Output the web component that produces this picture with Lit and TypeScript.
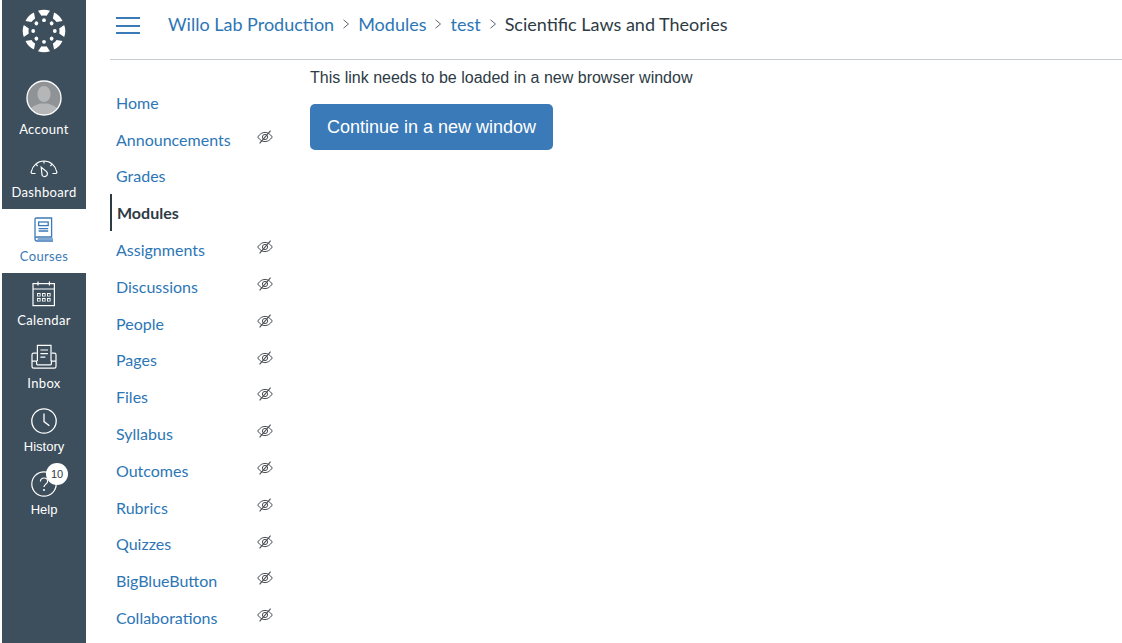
import { LitElement, html, css, svg } from "lit";
import { customElement } from "lit/decorators.js";

const eye = html`<svg class="eye" viewBox="0 0 16 14" width="16" height="14" fill="none" stroke="#4a4f55" stroke-width="1">
  <path d="M.7 7C3 3.8 5.4 2.4 8 2.4S13 3.8 15.3 7C13 10.2 10.6 11.6 8 11.6S3 10.2.7 7Z"/>
  <circle cx="8" cy="7" r="2.6"/>
  <path d="M2.6 13.4 13.6.6" stroke-width="1.1"/>
</svg>`;

const logo = html`<svg viewBox="-22 -22 44 44" width="44" height="44" fill="#fff">
  ${[0, 45, 90, 135, 180, 225, 270, 315].map(
    (a) => svg`<g transform="rotate(${a})">
      <path d="M-6 -20.2Q0 -22.4 6 -20.2L2.6 -15.2Q0 -15.8 -2.6 -15.2Z"/>
      <circle cx="0" cy="-10.8" r="1.9"/>
    </g>`
  )}
</svg>`;

const account = html`<svg viewBox="0 0 36 36" width="36" height="36">
  <defs><clipPath id="c"><circle cx="18" cy="18" r="16.4"/></clipPath></defs>
  <circle cx="18" cy="18" r="16.4" fill="#8f9396"/>
  <g clip-path="url(#c)" fill="#b4b6b8">
    <circle cx="18" cy="18" r="16.4" fill="#3d4f5c" opacity="0"/>
    <ellipse cx="18" cy="14" rx="6.6" ry="8"/>
    <path d="M2 36C2 27 9 25.5 14 23.5H22C27 25.5 34 27 34 36Z"/>
  </g>
  <circle cx="18" cy="18" r="17" fill="none" stroke="#fff" stroke-width="1.4"/>
</svg>`;

const dash = html`<svg viewBox="0 0 28 26" width="28" height="26" fill="none" stroke="#fff" stroke-width="1.2">
  <path d="M5.5 20.5H2.2C1.3 20.5 1 19.8 1.2 19C2.4 12.6 7.6 8 14 8S25.6 12.6 26.8 19C27 19.8 26.7 20.5 25.8 20.5H22.5"/>
  <path d="M14 8V10.4M6 11.4 7.6 13M22 11.4 20.4 13" />
  <path d="M11.2 14.2 16.6 18.6C17.8 20 17.6 22 16.2 23C14.8 24 12.9 23.6 12.1 22.2Z"/>
</svg>`;

const book = html`<svg viewBox="0 0 20 26" width="20" height="26" fill="none" stroke="#3b7ab8" stroke-width="1.3">
  <path d="M1 21.5V2.2C1 1.5 1.5 1 2.2 1H17.6V20H3C1.8 20 1 20.7 1 21.8S1.8 24 3 24H19"/>
  <path d="M3.6 22H19"/>
  <rect x="4.6" y="5" width="9.6" height="3.6"/>
  <path d="M4.6 11.6H14.2M4.6 14H14.2"/>
</svg>`;

const calendar = html`<svg viewBox="0 0 24 26" width="24" height="26" fill="none" stroke="#fff" stroke-width="1.2">
  <rect x="1" y="2.6" width="21.4" height="22"/>
  <path d="M1 8H22.4M6 .6V4.4M17.4 .6V4.4"/>
  <g fill="#fff" stroke="none">
    ${[5, 10, 15].flatMap((x) =>
      [12, 17].map((y) => svg`<path fill-rule="evenodd" d="M${x} ${y}h3.6v3.6h-3.6zM${x + 0.9} ${y + 0.9}v1.8h1.8v-1.8z"/>`)
    )}
  </g>
</svg>`;

const inbox = html`<svg viewBox="0 0 26 26" width="26" height="26" fill="none" stroke="#fff" stroke-width="1.2">
  <path d="M6.4 17V1.4H20V17"/>
  <path d="M9.4 6H17M9.4 9.6H17M9.4 13.2H14.4"/>
  <path d="M5.8 9.2H2.6C1.6 9.2 1 9.9 1 10.8V22.6C1 23.6 1.6 24.2 2.6 24.2H23.4C24.4 24.2 25 23.6 25 22.6V10.8C25 9.9 24.4 9.2 23.4 9.2H20.6"/>
  <path d="M1 17.2H5.6V19.8C5.6 20.4 6 20.8 6.6 20.8H19.4C20 20.8 20.4 20.4 20.4 19.8V17.2H25"/>
</svg>`;

const clock = html`<svg viewBox="0 0 26 26" width="26" height="26" fill="none" stroke="#fff" stroke-width="1.3">
  <circle cx="13" cy="13" r="12.2"/>
  <path d="M13 5.4V13.6L18.4 17.8"/>
</svg>`;

const help = html`<svg viewBox="0 0 26 26" width="26" height="26" fill="none" stroke="#fff" stroke-width="1.2">
  <circle cx="13" cy="13" r="12.2"/>
  <path d="M9.4 10.4C9.4 8.2 11 7 13 7S16.6 8.2 16.6 10.2C16.6 13 13 13.2 13 16"/>
  <circle cx="13" cy="19" r="1" fill="#fff" stroke="none"/>
</svg>`;

const globalItems = [
  { label: "Account", icon: account, cls: "acct" },
  { label: "Dashboard", icon: dash, cls: "" },
  { label: "Courses", icon: book, cls: "active" },
  { label: "Calendar", icon: calendar, cls: "" },
  { label: "Inbox", icon: inbox, cls: "" },
  { label: "History", icon: clock, cls: "helv" },
  { label: "Help", icon: help, cls: "helv help" },
];

const courseItems: [string, boolean][] = [
  ["Home", false],
  ["Announcements", true],
  ["Grades", false],
  ["Modules", false],
  ["Assignments", true],
  ["Discussions", true],
  ["People", true],
  ["Pages", true],
  ["Files", true],
  ["Syllabus", true],
  ["Outcomes", true],
  ["Rubrics", true],
  ["Quizzes", true],
  ["BigBlueButton", true],
  ["Collaborations", true],
];

@customElement("app-root")
export class AppRoot extends LitElement {
  static styles = css`
    :host {
      display: block;
      height: 643px;
      overflow: hidden;
      background: #fff;
      font-family: "Lato", "Liberation Sans", sans-serif;
    }
    .page {
      display: flex;
      height: 643px;
      padding-left: 2px;
      box-sizing: border-box;
    }
    .global {
      width: 84px;
      flex: none;
      background: #3d4f5c;
      display: flex;
      flex-direction: column;
    }
    .logo {
      height: 81.8px;
      flex: none;
      display: flex;
      justify-content: center;
      padding-top: 9px;
      box-sizing: border-box;
    }
    .gitem {
      height: 63.6px;
      flex: none;
      display: flex;
      flex-direction: column;
      align-items: center;
      color: #fff;
      font-size: 13px;
      letter-spacing: 0.35px;
      box-sizing: border-box;
      padding-top: 8px;
      position: relative;
    }
    .gicon {
      height: 26px;
      display: flex;
      align-items: flex-end;
      justify-content: center;
      position: relative;
    }
    .glabel {
      margin-top: 5px;
      line-height: 16px;
    }
    .gitem.active {
      background: #fff;
      color: #3b7ab8;
    }
    .gitem.helv {
      font-family: "Liberation Sans", sans-serif;
      letter-spacing: 0;
    }
    .badge {
      position: absolute;
      left: 15px;
      top: -8px;
      width: 22px;
      height: 22px;
      border-radius: 50%;
      background: #fff;
      color: #2d3b45;
      font-family: "Liberation Sans", sans-serif;
      font-size: 11px;
      line-height: 22px;
      text-align: center;
    }
    .main {
      flex: 1;
      min-width: 0;
      padding-left: 24px;
    }
    .header {
      height: 60px;
      box-sizing: border-box;
      border-bottom: 1px solid #c7cdd1;
      display: flex;
      align-items: flex-start;
      padding: 0 0 0 6px;
    }
    .burger {
      width: 24px;
      margin-top: 17px;
      display: flex;
      flex-direction: column;
      gap: 5.5px;
    }
    .burger span {
      display: block;
      height: 2px;
      background: #3b7ab8;
    }
    .crumbs {
      margin: 13px 0 0 28px;
      display: flex;
      align-items: center;
      font-size: 18px;
      line-height: 22px;
    }
    .crumbs a {
      color: #2d76b5;
    }
    .crumbs .cur {
      color: #2d3b45;
    }
    .sep {
      width: 24px;
      display: flex;
      justify-content: center;
    }
    .below {
      display: flex;
    }
    .cnav {
      width: 200px;
      flex: none;
      padding-top: 24px;
      box-sizing: content-box;
    }
    .citem {
      height: 36.8px;
      display: flex;
      align-items: center;
      padding-left: 6px;
      color: #2d76b5;
      font-size: 16px;
      position: relative;
      box-sizing: border-box;
      width: 164px;
    }
    .citem.cur {
      color: #2d3b45;
      font-weight: 700;
      border-left: 2px solid #2d3b45;
      padding-left: 5px;
    }
    .eye {
      position: absolute;
      left: 147px;
      top: 9px;
    }
    .content {
      padding-left: 0;
      color: #2d3b45;
      font-family: "Liberation Sans", sans-serif;
    }
    .msg {
      font-size: 16px;
      line-height: 20px;
      margin-top: 8px;
    }
    .btn {
      display: inline-block;
      margin-top: 16px;
      width: 243px;
      height: 46px;
      line-height: 46px;
      text-align: center;
      background: #3b7ab8;
      border-radius: 5px;
      color: #fff;
      font-size: 18px;
    }
  `;

  render() {
    return html`<div class="page">
      <nav class="global">
        <div class="logo">${logo}</div>
        ${globalItems.map(
          (g) => html`<div class="gitem ${g.cls}">
            <div class="gicon">
              ${g.icon}${g.label === "Help" ? html`<span class="badge">10</span>` : ""}
            </div>
            <div class="glabel">${g.label}</div>
          </div>`
        )}
      </nav>
      <div class="main">
        <header class="header">
          <div class="burger"><span></span><span></span><span></span></div>
          <div class="crumbs">
            <a>Willo Lab Production</a>
            <span class="sep">${this.chev()}</span>
            <a>Modules</a>
            <span class="sep">${this.chev()}</span>
            <a>test</a>
            <span class="sep">${this.chev()}</span>
            <span class="cur">Scientific Laws and Theories</span>
          </div>
        </header>
        <div class="below">
          <nav class="cnav">
            ${courseItems.map(
              ([name, hidden]) => html`<div class="citem ${name === "Modules" ? "cur" : ""}">
                ${name}${hidden ? eye : ""}
              </div>`
            )}
          </nav>
          <div class="content">
            <div class="msg">This link needs to be loaded in a new browser window</div>
            <a class="btn">Continue in a new window</a>
          </div>
        </div>
      </div>
    </div>`;
  }

  chev() {
    return html`<svg viewBox="0 0 8 10" width="8" height="10" fill="none" stroke="#5a6670" stroke-width="1"><path d="M1.5 .8 6.5 5 1.5 9.2"/></svg>`;
  }
}
